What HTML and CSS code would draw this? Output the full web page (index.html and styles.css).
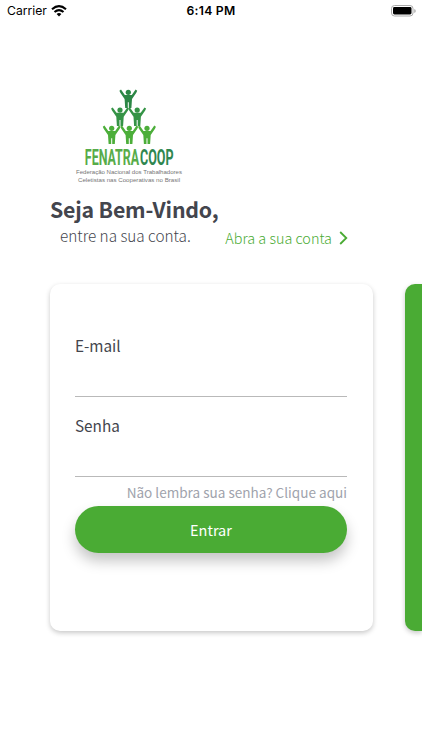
FILE: index.html
```html
<!DOCTYPE html>
<html lang="pt-BR">
<head>
<meta charset="utf-8">
<title>Fenatracoop</title>
<link rel="stylesheet" href="styles.css">
</head>
<body>
<header class="status">
  <div class="carrier"><span>Carrier</span>
    <svg class="wifi" width="16" height="12" viewBox="0 0 16 12" fill="none" stroke="#000" stroke-width="2.1"><path d="M1 4.3Q8-1.9 15 4.3M3.5 7Q8 3.1 12.5 7"/><path d="M5.6 8.9Q8 7 10.4 8.9L8 11.4Z" fill="#000" stroke="none"/></svg>
  </div>
  <span class="time">6:14 PM</span>
  <svg class="battery" width="26" height="12" viewBox="0 0 26 12"><rect x=".5" y=".5" width="21.5" height="10.5" rx="3" fill="#fff" stroke="#aaa"/><rect x="2" y="2" width="18.5" height="7.5" rx="1.4"/><path d="M23.4 4v4q1.2-.6 1.2-2t-1.2-2" fill="#999"/></svg>
</header>
<main>
  <svg class="logo" width="120" height="102" viewBox="70 85 120 102">
    <defs><g id="person"><circle cx="0" cy="0" r="2.6"/><path d="M-8.9-1.6-7.3-2.7-3.5 2.6H3.5L7.3-2.7 8.9-1.6 8 .4 3.7 6.7 3.1 15.8H.5V10H-.5V15.8H-3.1L-3.7 6.7-8 .4Z"/></g></defs>
    <use href="#person" x="128.3" y="92.3" fill="#2c8746"/>
    <use href="#person" x="120" y="110.1" fill="#359346"/>
    <use href="#person" x="137.2" y="110.1" fill="#359346"/>
    <use href="#person" x="111.7" y="128.3" fill="#4cae3a"/>
    <use href="#person" x="129.3" y="128.3" fill="#4cae3a"/>
    <use href="#person" x="147" y="128.3" fill="#4cae3a"/>
    <g class="brand">
      <text transform="translate(84.8 165) scale(.566 1)" fill="#57ac49">FENATRA</text>
      <text transform="translate(140 165) scale(.57 1)" fill="#2f8750">COOP</text>
    </g>
    <text class="tagline" x="76" y="174" textLength="106" lengthAdjust="spacingAndGlyphs">Federação Nacional dos Trabalhadores</text>
    <text class="tagline" x="78" y="182" textLength="102" lengthAdjust="spacingAndGlyphs">Celetistas nas Cooperativas no Brasil</text>
  </svg>
  <h1>Seja Bem-Vindo,</h1>
  <div class="intro">
    <p>entre na sua conta.</p>
    <a class="signup"><span>Abra a sua conta</span><svg width="9" height="14" viewBox="0 0 9 14" fill="none" stroke="#4aab34" stroke-width="1.8"><path d="M1.2 1 7.3 7 1.2 13"/></svg></a>
  </div>
  <div class="carousel">
    <form class="card">
      <label class="field"><span>E-mail</span></label>
      <label class="field"><span>Senha</span></label>
      <a class="forgot">Não lembra sua senha? Clique aqui</a>
      <button type="button">Entrar</button>
    </form>
    <section class="card next"></section>
  </div>
</main>
</body>
</html>
```
FILE: styles.css
```css
* { box-sizing: border-box; }
html { overflow: hidden; }
body {
  margin: 0;
  width: 422px;
  height: 750px;
  overflow: hidden;
  background: #fff;
  color: #43454d;
  font-family: "Noto Sans CJK SC", sans-serif;
}
.status {
  display: grid;
  grid-template-columns: 1fr auto 1fr;
  align-items: center;
  height: 22px;
  padding: 0 5px 0 7px;
  color: #000;
  font: 12.2px/22px Inter, sans-serif;
}
.carrier { display: flex; align-items: center; gap: 4px; }
.time { margin-right: 2px; font-weight: 600; letter-spacing: .25px; }
.battery { justify-self: end; }
.logo { display: block; margin: 63px 0 0 70px; }
.brand { font: 700 22px Roboto, sans-serif; }
.tagline { font: 6px "Liberation Sans", sans-serif; fill: #757575; }
h1 {
  margin: 6px 0 0 50px;
  font-size: 21.3px;
  line-height: 32px;
  font-weight: 700;
  letter-spacing: -.2px;
}
.intro {
  display: flex;
  justify-content: space-between;
  width: 348px;
  height: 59px;
  padding-left: 60px;
  line-height: 22px;
}
.intro p { margin: -1px 0 0; font-size: 15.3px; font-weight: 300; }
.signup {
  display: flex;
  align-items: center;
  gap: 7px;
  height: 22px;
  margin-top: 2px;
  color: #4aab34;
  font-size: 14.4px;
  font-weight: 300;
}
.carousel { display: flex; gap: 32px; padding: 0 0 0 49.6px; }
.card {
  flex: 0 0 323px;
  height: 346.5px;
  padding: 50px 26px 0 25.4px;
  border-radius: 10px;
  background: #fff;
  box-shadow: 0 2px 5px rgba(0, 0, 0, .22);
}
.next {
  flex: 1 0 0;
  padding: 0;
  border-radius: 10px 0 0 10px;
  background: #4aab34;
}
.field {
  display: block;
  height: 63px;
  margin-bottom: 16.5px;
  border-bottom: 1px solid #b9b9b9;
  font-size: 15.3px;
  line-height: 22px;
}
.field + .field { margin-bottom: 4.5px; }
.forgot {
  display: block;
  height: 22px;
  color: #a0a3ac;
  font-size: 13.55px;
  line-height: 22px;
  text-align: right;
  white-space: nowrap;
}
button {
  display: block;
  width: 272px;
  height: 47px;
  margin-top: 2.5px;
  padding: 0;
  border: 0;
  border-radius: 24px;
  background: #4aab34;
  box-shadow: 0 8px 14px rgba(0, 0, 0, .23);
  color: #fff;
  font: 14.5px/47px "Noto Sans CJK SC", sans-serif;
}
```
